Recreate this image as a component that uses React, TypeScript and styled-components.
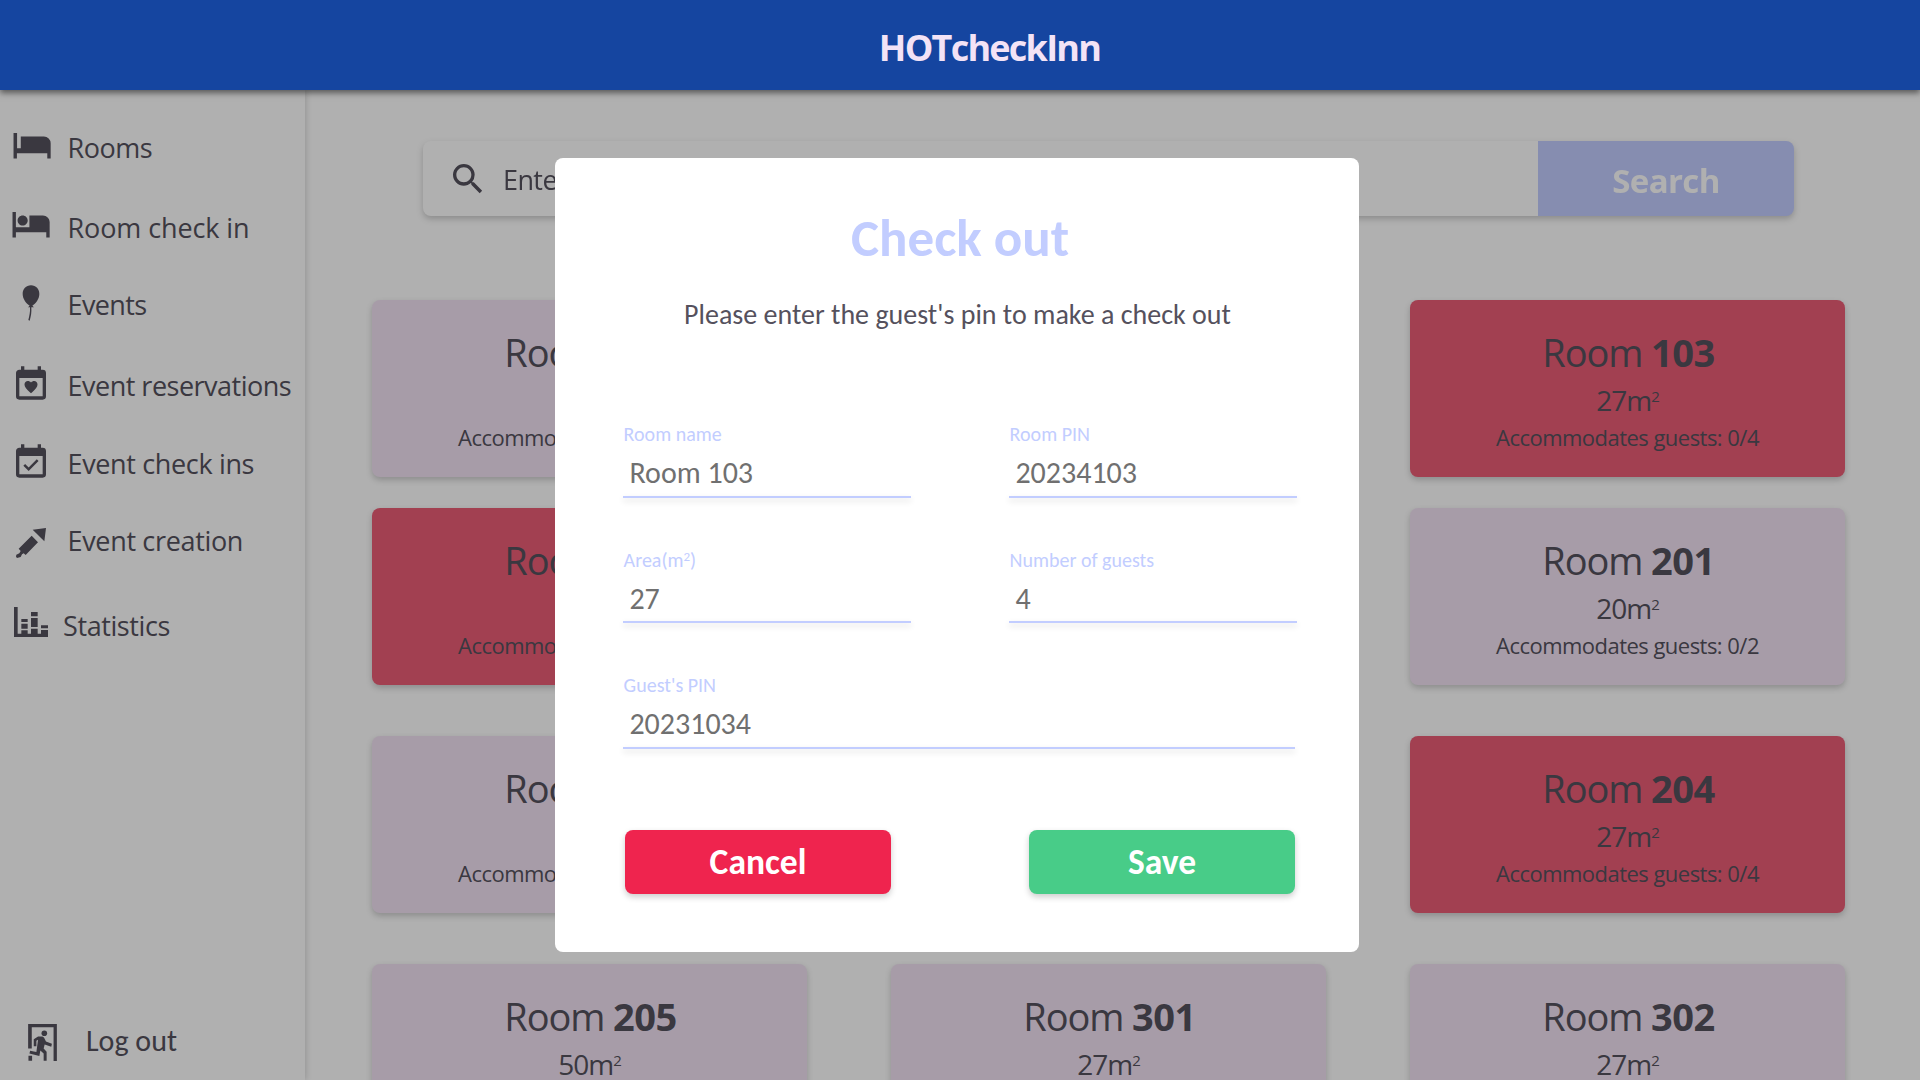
import React from 'react';
import styled, { createGlobalStyle } from 'styled-components';

const ui = '"Open Sans", "Noto Sans", sans-serif';
const humanist = 'Carlito, Calibri, Lato, sans-serif';
const ink = '#55515d';
const periwinkle = '#c2cdff';
const softShadow = '0 3px 6px rgba(0, 0, 0, 0.2)';

const GlobalStyle = createGlobalStyle`
  * { box-sizing: border-box; }
  body { margin: 0; background: #fff; overflow: hidden; }
  h1, h2, p { margin: 0; font-weight: inherit; }
  button, input { border: 0; margin: 0; padding: 0; font: inherit; background: none; }
`;

const Page = styled.div`
  position: relative;
  display: flex;
  flex-direction: column;
  width: 1920px;
  height: 1080px;
  overflow: hidden;
  color: ${ink};
  font-family: ${ui};
  font-weight: 400;
  font-variant-ligatures: none;
  white-space: nowrap;
`;

const Header = styled.header`
  position: relative;
  z-index: 3;
  flex: none;
  display: flex;
  align-items: center;
  justify-content: center;
  height: 90px;
  padding: 4px 0 0 59px;
  background: #1545a0;
  box-shadow: 0 3px 6px rgba(0, 0, 0, 0.5);
`;

const Brand = styled.h1`
  color: #f3e3f6;
  font-size: 36px;
  font-weight: 700;
  letter-spacing: -1.75px;
`;

const Body = styled.div`
  display: flex;
  flex: 1;
  min-height: 0;
`;

const Sidebar = styled.aside`
  display: flex;
  flex-direction: column;
  flex: none;
  width: 305px;
  padding: 27px 0 9px;
  box-shadow: 1px 0 6px rgba(0, 0, 0, 0.16);
`;

const NavItem = styled.a<{ $space: number }>`
  display: flex;
  align-items: center;
  height: 61px;
  margin-top: ${(p) => p.$space}px;
`;

const IconSlot = styled.span<{ $width: number; $lift: number }>`
  display: flex;
  flex: none;
  width: ${(p) => p.$width}px;
  padding-left: 11px;
  margin-bottom: ${(p) => p.$lift * 2}px;
`;

const NavIcon = styled.svg`
  width: 40px;
  height: 40px;
  fill: currentColor;
`;

const NavLabel = styled.span<{ $tracking: number }>`
  font-size: 27px;
  line-height: 61px;
  letter-spacing: ${(p) => p.$tracking}px;
`;

const LogOut = styled.a`
  display: flex;
  align-items: center;
  gap: 29px;
  height: 60px;
  margin-top: auto;
  padding-left: 28px;
  font: 400 30px/60px ${humanist};
`;

const ExitIcon = styled.svg`
  width: 29px;
  height: 37px;
  margin-top: 2px;
  fill: currentColor;
`;

const Main = styled.main`
  flex: 1;
  min-width: 0;
  padding: 51px 0 0 67px;
`;

const SearchBar = styled.div`
  display: flex;
  align-items: center;
  width: 1371px;
  height: 75px;
  margin: 0 0 84px 51px;
  border-radius: 8px;
  overflow: hidden;
`;

const SearchShell = styled.div`
  width: 1422px;
  filter: drop-shadow(0 3px 3px rgba(0, 0, 0, 0.2));
`;

const SearchField = styled.div`
  display: flex;
  align-items: center;
  gap: 14px;
  flex: 1;
  height: 100%;
  padding-left: 25px;
  background: #fff;
  font-size: 27px;
  letter-spacing: -0.6px;

  svg { width: 40px; height: 40px; fill: currentColor; }
`;

const SearchHint = styled.span`
  padding: 2px 0 0 1px;
`;

const SearchButton = styled.button`
  width: 256px;
  height: 100%;
  padding-top: 3px;
  background: ${periwinkle};
  color: #fff;
  font-size: 33px;
  font-weight: 700;
  letter-spacing: -0.6px;
`;

const CardRow = styled.div<{ $space: number }>`
  display: flex;
  gap: 84px;
  margin-top: ${(p) => p.$space}px;
`;

const Card = styled.article<{ $busy: boolean }>`
  display: flex;
  flex-direction: column;
  align-items: center;
  flex: none;
  width: 435px;
  height: 177px;
  padding-top: 26px;
  border-radius: 8px;
  background: ${(p) => (p.$busy ? '#eb5d76' : '#f2e3f4')};
  box-shadow: ${softShadow};
`;

const CardTitle = styled.h2`
  padding-left: 2px;
  font-size: 38px;
  line-height: 52px;
  letter-spacing: -1.1px;

  b { font-weight: 700; letter-spacing: -0.5px; }
`;

const CardArea = styled.p`
  font-size: 28px;
  line-height: 44px;
  letter-spacing: -1px;

  sup {
    display: inline-block;
    font-size: 15px;
    line-height: 1;
    vertical-align: 9px;
  }
`;

const CardGuests = styled.p`
  font-size: 22px;
  line-height: 31px;
  letter-spacing: -0.53px;
`;

const Overlay = styled.div`
  position: absolute;
  inset: 90px 0 0;
  z-index: 2;
  display: flex;
  align-items: flex-start;
  padding: 68px 0 0 555px;
  background: rgba(0, 0, 0, 0.31);
`;

const Dialog = styled.section`
  width: 804px;
  height: 794px;
  padding: 47px 62px 0 68px;
  border-radius: 8px;
  background: #fff;
  font-family: ${humanist};
  font-weight: 400;
`;

const DialogTitle = styled.h2`
  color: ${periwinkle};
  font-size: 53px;
  font-weight: 700;
  line-height: 66px;
  text-align: center;
`;

const DialogText = styled.p`
  margin: 27px 5px 90px 0;
  font-size: 28px;
  line-height: 34px;
  text-align: center;
`;

const FieldRow = styled.div<{ $space?: number }>`
  display: flex;
  gap: 98px;
  margin-top: ${(p) => p.$space ?? 0}px;
`;

const Field = styled.label<{ $wide?: boolean }>`
  display: flex;
  flex-direction: column;
  width: ${(p) => (p.$wide ? 672 : 288)}px;
`;

const FieldLabel = styled.span`
  height: 24px;
  padding-left: 0.6px;
  color: ${periwinkle};
  font-size: 20px;
  line-height: 24px;

  sup {
    display: inline-block;
    font-size: 13px;
    line-height: 1;
    vertical-align: 6px;
  }
`;

const FieldValue = styled.span<{ $top: number; $bottom: number }>`
  padding: ${(p) => p.$top}px 0 ${(p) => p.$bottom}px 6.4px;
  color: #707070;
  font-size: 30px;
  line-height: 36px;
`;

const Underline = styled.span`
  height: 2px;
  background: ${periwinkle};
  box-shadow: 0 3px 6px rgba(0, 0, 0, 0.16);
`;

const Actions = styled.div`
  display: flex;
  justify-content: space-between;
  padding: 81px 2px 0;
`;

const ActionButton = styled.button<{ $color: string }>`
  width: 266px;
  height: 64px;
  padding-top: 1px;
  border-radius: 8px;
  background: ${(p) => p.$color};
  box-shadow: ${softShadow};
  color: #fff;
  font-size: 35.5px;
  font-weight: 700;
  line-height: 63px;
`;

const calendar =
  'M19,19H5V8H19M19,3H18V1H16V3H8V1H6V3H5C3.89,3 3,3.9 3,5V19A2,2 0 0,0 5,21H19A2,2 0 0,0 21,19V5A2,2 0 0,0 19,3Z';

const icons = {
  bed: (
    <NavIcon viewBox="-0.5 0.2 23.7 23.7">
      <path d="M19 7H5.3V14H3.1V5H1V20H3V17H21V20H23V11A4 4 0 0 0 19 7Z" />
    </NavIcon>
  ),
  hotel: (
    <NavIcon viewBox="0.1 0.2 23.7 23.7">
      <path d="M7 13c1.66 0 3-1.34 3-3S8.66 7 7 7s-3 1.34-3 3 1.34 3 3 3zm12-6h-8v7H3V5H1v15h2v-3h18v3h2v-9c0-2.21-1.79-4-4-4z" />
    </NavIcon>
  ),
  balloon: (
    <NavIcon viewBox="33 609 120 120">
      <path d="M93 616C78 616 68 627 68 642C68 657 79 671 89 677L84 682H90C91 696 88 708 85 720L89 722C93 709 95 697 94 682H102L97 677C107 671 118 657 118 642C118 627 108 616 93 616Z" />
    </NavIcon>
  ),
  heart: (
    <NavIcon viewBox="0 -1 24 24">
      <path fillRule="evenodd" d={calendar} />
      <path d="M12 17.2L11.3 16.5C9.2 14.6 8.1 13.4 8.1 11.9C8.1 10.7 9 9.8 10.1 9.8C10.8 9.8 11.5 10.1 12 10.7C12.5 10.1 13.2 9.8 13.9 9.8C15 9.8 15.9 10.7 15.9 11.9C15.9 13.4 14.8 14.6 12.7 16.5Z" />
    </NavIcon>
  ),
  check: (
    <NavIcon viewBox="0 -1 24 24">
      <path fillRule="evenodd" d={calendar} />
      <path d="M16.53 11.06L15.47 10L10.59 14.88L8.47 12.76L7.41 13.82L10.59 17Z" />
    </NavIcon>
  ),
  rocket: (
    <NavIcon viewBox="33 459 120 120">
      <path d="M98 479L138 474L133 514Z" />
      <path d="M95 497L114 517L77 555L71 550L66 553L62 561L51 564L48 560L49 554L58 550L62 543L56 536Z" />
    </NavIcon>
  ),
  chart: (
    <NavIcon viewBox="33 696 120 120">
      <path d="M42 711H53V791H64V781H83V791H93V776H113V791H123V780H144V801H42Z" />
      <path d="M64 747H83V756H64ZM64 761H83V776H64ZM93 726H113V739H93ZM93 744H113V771H93ZM123 766H144V775H123Z" />
    </NavIcon>
  ),
};

const nav: { label: string; icon: keyof typeof icons; space: number; slot: number; lift: number; tracking: number }[] = [
  { label: 'Rooms', icon: 'bed', space: 0, slot: 67.5, lift: 3, tracking: -0.5 },
  { label: 'Room check in', icon: 'hotel', space: 19, slot: 67.5, lift: 3.5, tracking: -0.1 },
  { label: 'Events', icon: 'balloon', space: 16, slot: 67.5, lift: 1.5, tracking: -0.6 },
  { label: 'Event reservations', icon: 'heart', space: 20, slot: 67.5, lift: 3, tracking: -0.5 },
  { label: 'Event check ins', icon: 'check', space: 17, slot: 67.5, lift: 3, tracking: -0.35 },
  { label: 'Event creation', icon: 'rocket', space: 16, slot: 67.5, lift: -2.5, tracking: -0.33 },
  { label: 'Statistics', icon: 'chart', space: 24, slot: 63, lift: 3.5, tracking: -0.4 },
];

type Room = { name: string; area: number; capacity: number; busy?: boolean };

const rows: { space: number; rooms: Room[] }[] = [
  {
    space: 0,
    rooms: [
      { name: '101', area: 20, capacity: 2 },
      { name: '102', area: 20, capacity: 2 },
      { name: '103', area: 27, capacity: 4, busy: true },
    ],
  },
  {
    space: 31,
    rooms: [
      { name: '104', area: 27, capacity: 4, busy: true },
      { name: '105', area: 50, capacity: 6 },
      { name: '201', area: 20, capacity: 2 },
    ],
  },
  {
    space: 51,
    rooms: [
      { name: '202', area: 20, capacity: 2 },
      { name: '203', area: 27, capacity: 4 },
      { name: '204', area: 27, capacity: 4, busy: true },
    ],
  },
  {
    space: 51,
    rooms: [
      { name: '205', area: 50, capacity: 6 },
      { name: '301', area: 27, capacity: 4 },
      { name: '302', area: 27, capacity: 4 },
    ],
  },
];

function RoomCard({ room }: { room: Room }) {
  return (
    <Card $busy={!!room.busy}>
      <CardTitle>
        Room <b>{room.name}</b>
      </CardTitle>
      <CardArea>
        {room.area}m<sup>2</sup>
      </CardArea>
      <CardGuests>Accommodates guests: 0/{room.capacity}</CardGuests>
    </Card>
  );
}

function FormField(props: { label: React.ReactNode; value: string; wide?: boolean; top?: number; bottom?: number }) {
  return (
    <Field $wide={props.wide}>
      <FieldLabel>{props.label}</FieldLabel>
      <FieldValue $top={props.top ?? 9} $bottom={props.bottom ?? 5}>
        {props.value}
      </FieldValue>
      <Underline />
    </Field>
  );
}

export default function App() {
  return (
    <Page>
      <GlobalStyle />
      <Header>
        <Brand>HOTcheckInn</Brand>
      </Header>
      <Body>
        <Sidebar>
          {nav.map((item) => (
            <NavItem key={item.label} $space={item.space}>
              <IconSlot $width={item.slot} $lift={item.lift}>
                {icons[item.icon]}
              </IconSlot>
              <NavLabel $tracking={item.tracking}>{item.label}</NavLabel>
            </NavItem>
          ))}
          <LogOut>
            <ExitIcon viewBox="84 130 87 112">
              <path d="M84 130H171V242H161V140H95V204H84ZM85 226H96V241H85Z" />
              <circle cx="133" cy="158" r="8.5" />
              <path d="M101 176L114 168H127L132 171L138 183L156 190L154 199L134 192L131 204L140 214V241H131V219L121 210L118 227L88 219L90 211L109 215L114 178L109 181V197H101Z" />
            </ExitIcon>
            Log out
          </LogOut>
        </Sidebar>
        <Main>
          <SearchShell>
            <SearchBar>
              <SearchField>
                <svg viewBox="0 0 24 24">
                  <path d="M15.5 14h-.79l-.28-.27A6.471 6.471 0 0 0 16 9.5 6.5 6.5 0 1 0 9.5 16c1.61 0 3.09-.59 4.23-1.57l.27.28v.79l5 4.99L20.49 19l-4.99-5zm-6 0C7.01 14 5 11.99 5 9.5S7.01 5 9.5 5 14 7.01 14 9.5 11.99 14 9.5 14z" />
                </svg>
                <SearchHint>Enter room name</SearchHint>
              </SearchField>
              <SearchButton>Search</SearchButton>
            </SearchBar>
          </SearchShell>
          {rows.map((row, i) => (
            <CardRow key={i} $space={row.space}>
              {row.rooms.map((room) => (
                <RoomCard key={room.name} room={room} />
              ))}
            </CardRow>
          ))}
        </Main>
      </Body>
      <Overlay>
        <Dialog>
          <DialogTitle>Check out</DialogTitle>
          <DialogText>Please enter the guest's pin to make a check out</DialogText>
          <FieldRow>
            <FormField label="Room name" value="Room 103" />
            <FormField label="Room PIN" value="20234103" />
          </FieldRow>
          <FieldRow $space={50}>
            <FormField label={<>Area(m<sup>2</sup>)</>} value="27" bottom={4} />
            <FormField label="Number of guests" value="4" bottom={4} />
          </FieldRow>
          <FieldRow $space={50}>
            <FormField label="Guest's PIN" value="20231034" wide />
          </FieldRow>
          <Actions>
            <ActionButton $color="#ef244e">Cancel</ActionButton>
            <ActionButton $color="#48cc88">Save</ActionButton>
          </Actions>
        </Dialog>
      </Overlay>
    </Page>
  );
}
